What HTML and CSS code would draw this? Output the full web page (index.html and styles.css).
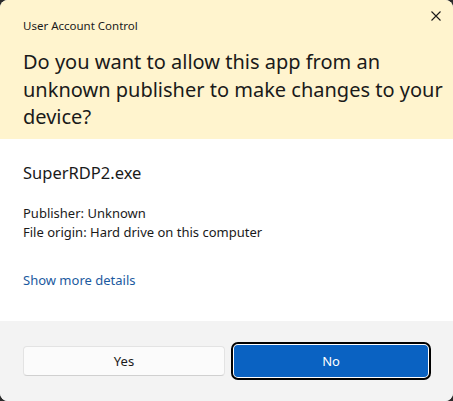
FILE: index.html
```html
<!DOCTYPE html>
<html lang="en">
<head>
  <meta charset="UTF-8">
  <title>User Account Control</title>
  <link rel="stylesheet" href="styles.css">
</head>
<body>

<div class="dialog">
  <!-- Cabeçalho amarelo -->
  <header class="top">
    <div class="caption">
      <span class="app-title">User Account Control</span>
      <button class="close" aria-label="Close">
        <svg width="10" height="10" viewBox="0 0 10 10">
          <path d="M0.5 0.5 L9.5 9.5 M9.5 0.5 L0.5 9.5" stroke="#1a1a1a" stroke-width="1.1" fill="none"/>
        </svg>
      </button>
    </div>
    <h1>Do you want to allow this app from an<br>unknown publisher to make changes to your<br>device?</h1>
  </header>

  <!-- Detalhes do programa -->
  <section class="info">
    <h2>SuperRDP2.exe</h2>
    <p>Publisher: Unknown</p>
    <p>File origin: Hard drive on this computer</p>
    <a href="#" class="more">Show more details</a>
  </section>

  <!-- Botões -->
  <footer class="actions">
    <button class="btn yes">Yes</button>
    <button class="btn no">No</button>
  </footer>
</div>

</body>
</html>
```

FILE: styles.css
```css
* {
  margin: 0;
  padding: 0;
  box-sizing: border-box;
}
html, body {
  height: 100%;
}
body {
  background: #2b2b2b;
  font-family: 'Noto Sans', 'Open Sans', sans-serif;
  color: #1a1a1a;
}
.dialog {
  height: 401px;
  display: flex;
  flex-direction: column;
  background: #fff;
  border-radius: 8px;
  overflow: hidden;
}
.top {
  background: #fff4ce;
  height: 139px;
  padding: 0 8px 0 23px;
}
.caption {
  display: flex;
  justify-content: space-between;
  align-items: flex-start;
  height: 48px;
  padding-top: 17px;
}
.app-title {
  font-size: 11.5px;
  line-height: 18px;
}
.close {
  border: none;
  background: none;
  margin-top: -6px;
  margin-right: 4px;
  width: 10px;
  height: 10px;
  display: flex;
}
h1 {
  font-size: 20px;
  font-weight: 400;
  line-height: 27.5px;
  white-space: nowrap;
}
.info {
  flex: 1;
  padding: 22px 23px 0;
}
h2 {
  font-size: 16.5px;
  font-weight: 400;
  line-height: 24px;
  margin-bottom: 19px;
}
.info p {
  font-size: 13px;
  line-height: 19px;
}
.more {
  display: inline-block;
  margin-top: 29px;
  font-size: 13px;
  color: #1b5aa0;
  text-decoration: none;
}
.actions {
  height: 80px;
  background: #f3f3f3;
  display: flex;
  gap: 7px;
  align-items: center;
  padding: 0 23px 1px 23px;
}
.btn {
  font-family: inherit;
  font-size: 13px;
  border-radius: 4px;
  cursor: pointer;
}
.yes {
  width: 202px;
  height: 30px;
  background: #fbfbfb;
  border: 1px solid #e3e3e3;
  border-bottom-color: #d0d0d0;
  color: #1a1a1a;
}
.no {
  width: 198px;
  height: 36px;
  background: #0a62c2;
  color: #fff;
  border: 2px solid #fff;
  outline: 2px solid #000;
  outline-offset: -1px;
  border-radius: 6px;
  box-shadow: inset 0 0 0 1px #0a62c2;
}
```
